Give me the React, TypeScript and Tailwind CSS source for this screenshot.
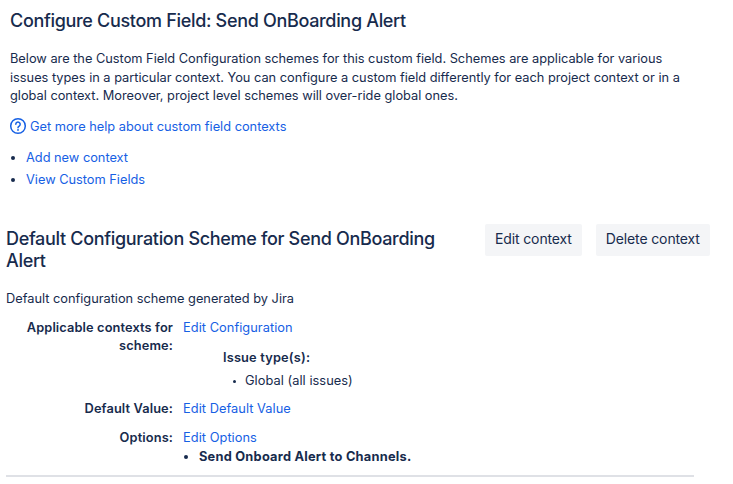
import { clsx } from "clsx";

const INTRO = [
  "Below are the Custom Field Configuration schemes for this custom field. Schemes are applicable for various",
  "issues types in a particular context. You can configure a custom field differently for each project context or in a",
  "global context. Moreover, project level schemes will over-ride global ones.",
];

const BUTTONS = ["Edit context", "Delete context"];

function HelpIcon() {
  return (
    <svg className="-ml-px" width="18" height="18" viewBox="0 0 18 18" fill="none" stroke="#1660e4" strokeWidth="1.5">
      <circle cx="9" cy="9" r="7.3" />
      <path d="M6.8 7.3a2.2 2.2 0 1 1 3.4 1.8c-.8.5-1.2.8-1.2 1.6" strokeLinecap="round" />
      <circle cx="9" cy="12.9" r="0.95" fill="#1660e4" stroke="none" />
    </svg>
  );
}

function Link({ text, className }: { text: string; className?: string }) {
  return <a href="#" className={clsx("block w-max text-[#1660e4]", className)}>{text}</a>;
}

export default function App() {
  return (
    <div className="h-[484px] w-[733px] overflow-hidden bg-white font-['Inter',sans-serif] text-[12.8px] leading-[18px] tracking-[0.05px] whitespace-nowrap text-[#172b4d]">
      <header className="pt-[9px] pl-[10px] tracking-[-0.01px]">
        <h1 className="text-[18px] leading-6 font-medium tracking-[-0.32px]">Configure Custom Field: Send OnBoarding Alert</h1>
        <div className="mt-4 leading-[19px]">
          {INTRO.map((line) => <p key={line} className="last:-mt-px">{line}</p>)}
        </div>
        <div className="mt-[11px] flex items-center gap-[3px]">
          <HelpIcon />
          <Link text="Get more help about custom field contexts" className="pt-[2px]" />
        </div>
        <ul className="mt-[11px] list-disc pl-4 leading-[22px]">
          <li><Link text="Add new context" /></li>
          <li><Link text="View Custom Fields" /></li>
        </ul>
      </header>

      <section className="mt-[33px] pl-[6px]">
        <div className="flex items-start">
          <h2 className="w-[479px] pt-1 text-[18px] leading-[22px] font-medium tracking-[-0.32px]">
            Default Configuration Scheme for Send OnBoarding<br />Alert
          </h2>
          <div className="flex gap-[14px]">
            {BUTTONS.map((label) => (
              <button key={label} type="button" className="h-8 rounded-[2px] bg-[#f4f5f7] px-[10px] pb-[2px] text-[14px] tracking-[-0.13px]">{label}</button>
            ))}
          </div>
        </div>
        <p className="mt-[18px] tracking-[-0.01px]">Default configuration scheme generated by Jira</p>
        <div className="mt-[11px] grid w-[688px] grid-cols-[167px_1fr] gap-x-[10px] border-b-2 border-[#dfe1e6] pb-[9px]">
          <div className="text-right font-semibold tracking-[0.12px]">Applicable contexts for<br />scheme:</div>
          <div className="h-[81px]">
            <Link text="Edit Configuration" />
            <p className="mt-3 pl-10 font-semibold tracking-[0.17px]">Issue type(s):</p>
            <p className="mt-[5px] flex items-center pl-[50px]">
              <span className="mr-[9px] size-[3px] rounded-full bg-[#172b4d]" />
              Global (all issues)
            </p>
          </div>
          <div className="text-right font-semibold tracking-[0.12px]">Default Value:</div>
          <Link text="Edit Default Value" className="h-[29px]" />
          <div className="text-right font-semibold tracking-[0.12px]">Options:</div>
          <div>
            <Link text="Edit Options" />
            <ul className="mt-px list-disc pl-4 font-bold tracking-[0.24px]">
              <li>Send Onboard Alert to Channels.</li>
            </ul>
          </div>
        </div>
      </section>
    </div>
  );
}
